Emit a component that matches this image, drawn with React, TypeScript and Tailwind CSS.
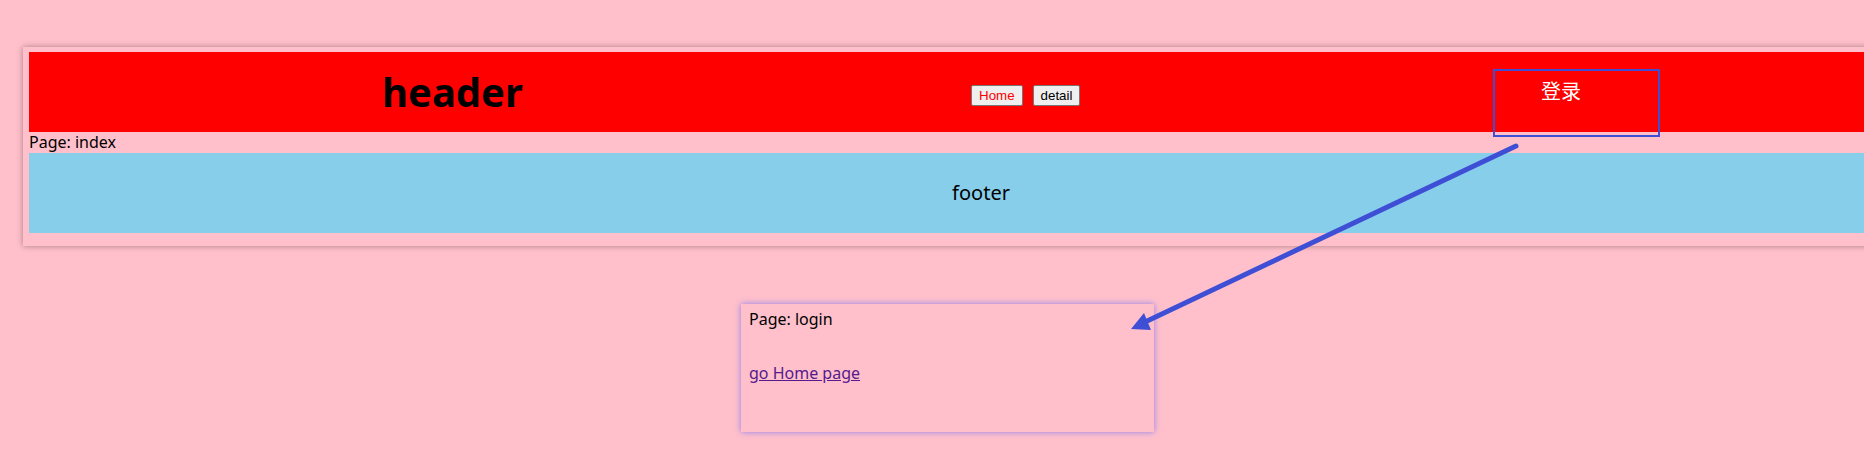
import React from 'react'

const font = { fontFamily: '"Noto Sans", "Noto Sans CJK SC", sans-serif' }

const NavButton = ({ label, active }: { label: string; active?: boolean }) => (
  <button
    type="button"
    className={[
      'h-[21px] px-[7px] py-0 border border-[#767676] rounded-[2px] bg-[#efefef] text-[13.33px] leading-[19px] font-["Liberation_Sans",Arial,sans-serif]',
      active ? 'text-[#ff0000]' : 'text-black'
    ].join(' ')}
  >
    {label}
  </button>
)

// annotation drawn on top of the screenshot: box round 登录 and the arrow to the login card
const Annotation = () => (
  <svg className="absolute inset-0 pointer-events-none" width="1864" height="460" viewBox="0 0 1864 460">
    <rect x="1494" y="70" width="165" height="66" fill="none" stroke="#3f4fd5" strokeWidth="2" />
    <line x1="1516" y1="146" x2="1145" y2="322" stroke="#3f4fd5" strokeWidth="5" strokeLinecap="round" />
    <polygon points="1131,329 1151,330 1144,313" fill="#3f4fd5" />
  </svg>
)

export default function App() {
  return (
    <div className="relative h-screen w-full overflow-hidden bg-[#ffc0cb] text-black" style={font}>
      <div className="pt-[47px] pl-[23px]">
        <div className="w-[1916px] pt-[5px] px-[6px] pb-[13px] bg-[#ffc0cb] shadow-[0_0_6px_rgba(0,0,0,0.35)]">
          <div className="flex h-[80px] items-center bg-[#ff0000]">
            <div className="w-[942px] pl-[353px]">
              <span className="text-[40px] font-bold leading-none">header</span>
            </div>
            <div className="w-[570px] flex gap-[10px] mt-[7px]">
              <NavButton label="Home" active />
              <NavButton label="detail" />
            </div>
            <div className="text-[20px] text-white leading-none">登录</div>
          </div>
          <div className="text-[16px] leading-[21px]">Page: index</div>
          <div className="flex h-[80px] items-center justify-center bg-[#87ceeb] text-[20px]">footer</div>
        </div>
        <div className="ml-[718px] mt-[58px] w-[413px] h-[128px] pt-[3px] px-[8px] bg-[#ffc0cb] shadow-[0_0_6px_rgba(80,95,255,0.65)]">
          <div className="text-[16px]">Page: login</div>
          <a href="#" className="block mt-[30px] w-fit text-[16px] text-[#551a8b] underline">go Home page</a>
        </div>
      </div>
      <Annotation />
    </div>
  )
}
